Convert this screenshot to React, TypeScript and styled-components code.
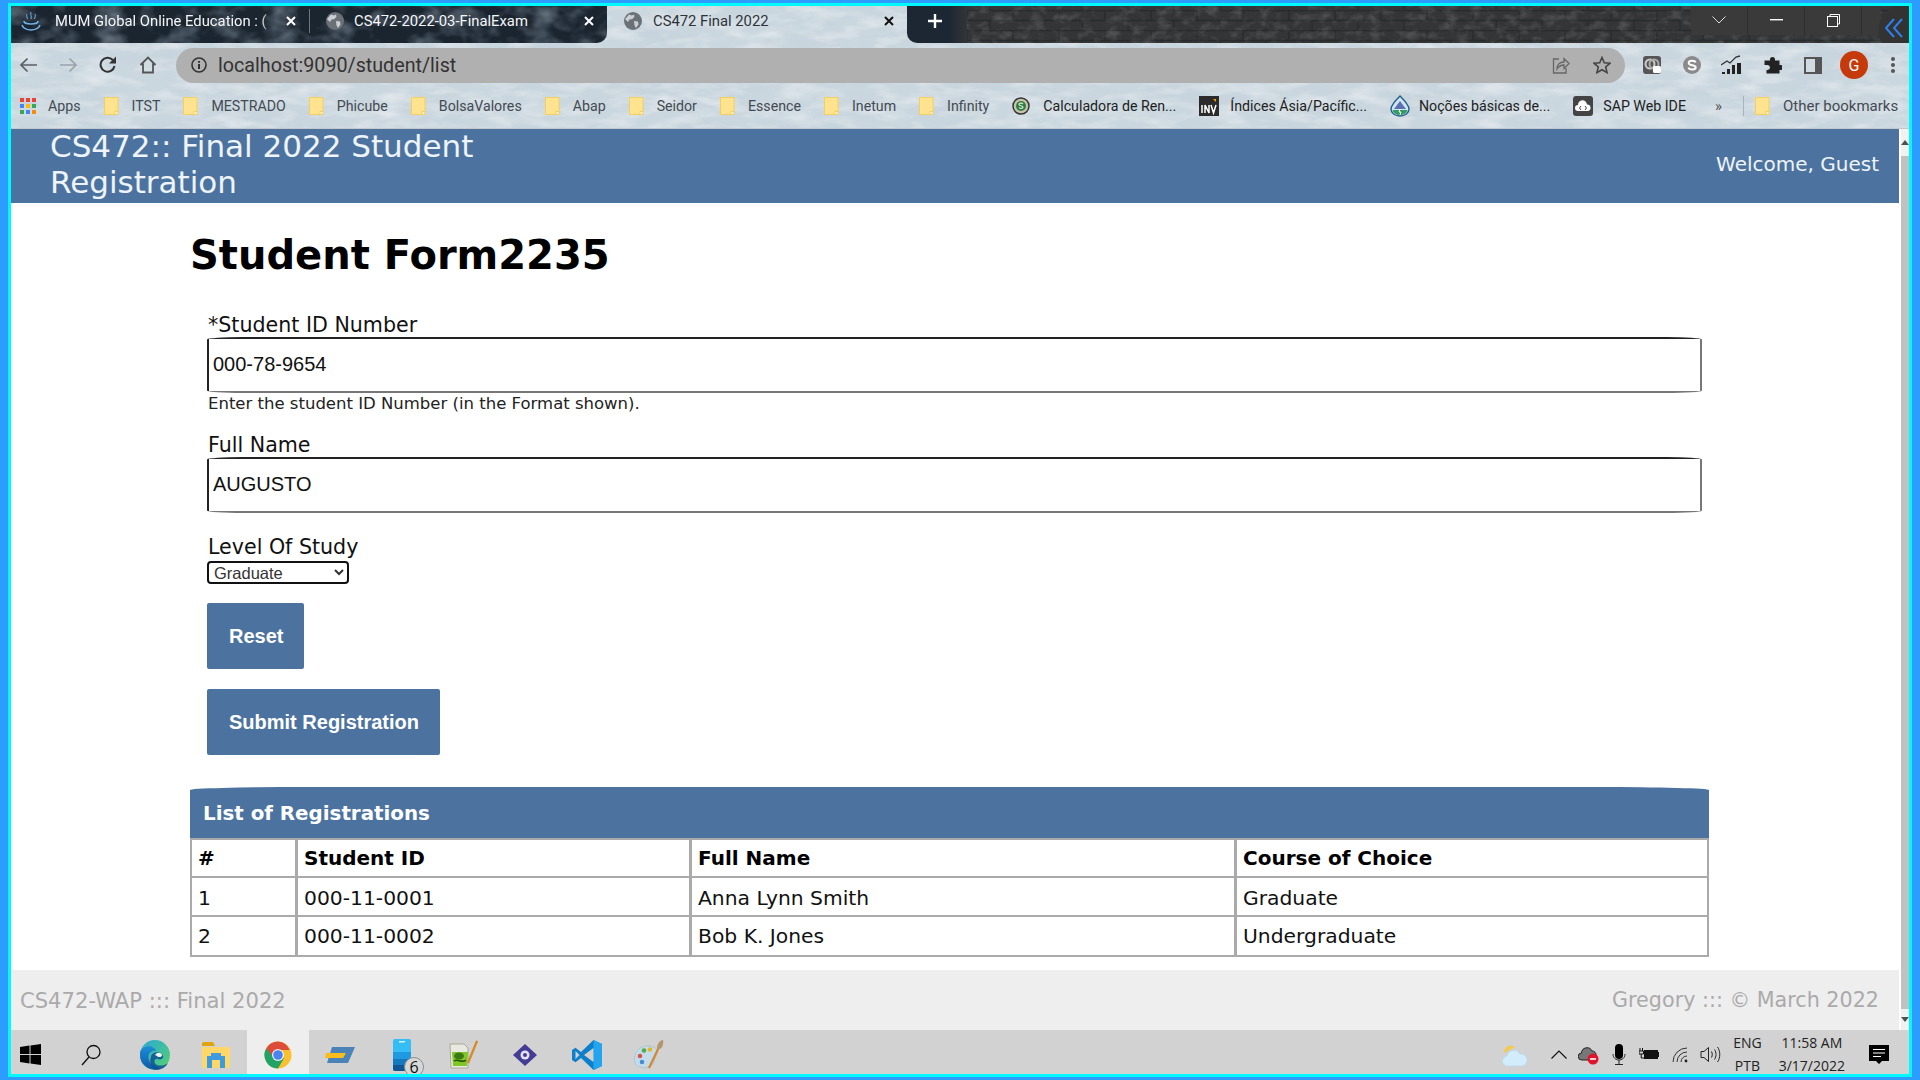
import React from "react";
import styled, { createGlobalStyle } from "styled-components";

const Global = createGlobalStyle`
  html, body { margin: 0; padding: 0; background: #2f9bff; overflow: hidden; }
  * { box-sizing: border-box; }
`;

const Screen = styled.div`
  width: 1920px; height: 1080px;
  border-style: solid; border-color: #2d9cff;
  border-width: 3px 8px 3px 8px;
`;
const Desktop = styled.div`
  height: 100%;
  border: 3px solid #00f8ff;
  display: flex; flex-direction: column;
  background: #fff; overflow: hidden;
`;
/* ---------- browser chrome ---------- */
const BrowserChrome = styled.header`
  position: relative; height: 123px; flex: none;
  background: #cbd7df;
  border-bottom: 1px solid #c4c8cc;
  display: flex; flex-direction: column;
  overflow: hidden;
`;
const TextureLayer = styled.svg`
  position: absolute; inset: 0; width: 100%; height: 100%;
  pointer-events: none;
`;
const TabStrip = styled.div`
  position: relative; height: 37px; flex: none; display: flex;
`;
const DarkStrip = styled.div<{ $w?: number; $side: "l" | "r" }>`
  position: relative; overflow: hidden;
  ${p => (p.$w ? `width:${p.$w}px;flex:none;` : "flex:1;")}
  background: ${p => (p.$side === "l" ? "#1a2530" : "linear-gradient(90deg,#1c2733 0,#1c2733 42px,#333537 60px)")};
  border-radius: ${p => (p.$side === "l" ? "0 0 10px 0" : "0 0 0 10px")};
  display: flex; align-items: center; padding-bottom: 7px;
`;
const Tab = styled.div<{ $w: number; $active?: boolean; $pad: number }>`
  position: relative; width: ${p => p.$w}px; flex: none; height: 100%;
  display: flex; align-items: center; padding-left: ${p => p.$pad}px;
  color: ${p => (p.$active ? "#2e3338" : "#f4f6f8")};
  ${p => p.$active && "padding-bottom: 7px;"}
`;
const TabTitle = styled.span<{ $w: number; $fade?: boolean }>`
  width: ${p => p.$w}px; flex: none; white-space: nowrap;
  font: 14.8px Roboto, sans-serif;
  ${p => p.$fade && "mask-image: linear-gradient(90deg,#000 92%,transparent 100%);"}
`;
const TabClose = styled.span<{ $dark?: boolean }>`
  display: flex; margin-left: auto; margin-right: 11px;
  color: ${p => (p.$dark ? "#111" : "#fff")};
`;
const TabDivider = styled.span`
  width: 1px; height: 24px; background: #6e757c; flex: none;
`;
const TabIcon = styled.span<{ $gap: number }>`
  display: flex; flex: none; margin-right: ${p => p.$gap}px;
`;
const PlusButton = styled.span`
  position: relative; display: flex; margin-left: 20px; color: #fff;
`;
const WindowControls = styled.div`
  position: relative; margin-left: auto; margin-right: 29px; margin-top: -1px;
  width: 189px; height: 30px; align-self: flex-start; background: #3a3a3a;
  display: grid; grid-template-columns: 57px 57px 57px 18px;
  color: #eee;
`;
const ControlCell = styled.span`
  display: flex; align-items: center; justify-content: center;
  border-right: 1px solid #2d2d2d;
`;
const CollapseTab = styled.div`
  position: absolute; right: 0; top: 0; width: 30px; height: 43px;
  background: #333; border-radius: 22px 0 0 16px;
  display: flex; align-items: center; justify-content: center;
  color: #2f7fe8;
`;
const Toolbar = styled.div`
  position: relative; height: 41px; flex: none; display: flex; align-items: center;
  padding: 3px 0 0 8px;
`;
const NavSlot = styled.span<{ $w: number }>`
  width: ${p => p.$w}px; flex: none; display: flex; color: #3f4448;
`;
const UrlBar = styled.div`
  height: 35px; width: 1449px; flex: none; border-radius: 18px; background: #b0b0b0;
  display: flex; align-items: center; padding: 0 14px 0 15px;
  color: #333;
  margin-left: 9px;
  font: 19.7px Roboto, sans-serif;
`;
const UrlText = styled.span`
  margin-left: 11px; flex: 1;
`;
const UrlAction = styled.span<{ $ml?: number }>`
  display: flex; margin-left: ${p => p.$ml ?? 0}px; color: #555;
`;
const ExtSlot = styled.span<{ $ml: number }>`
  display: flex; margin-left: ${p => p.$ml}px; align-items: center;
`;
const Avatar = styled.span`
  width: 28px; height: 28px; border-radius: 50%; background: #c6390b; color: #fff;
  display: flex; align-items: center; justify-content: center;
  font: 16px Roboto, sans-serif;
  margin-left: 18px;
`;
const BookmarkBar = styled.nav`
  position: relative; flex: 1; display: flex; align-items: center;
  padding: 0 0 0 9px; gap: 23px;
  font: 14.2px Roboto, sans-serif; color: #444a52;
`;
const Bookmark = styled.span<{ $g?: number; $dark?: boolean }>`
  display: flex; align-items: center; gap: ${p => p.$g ?? 13}px; white-space: nowrap;
  color: ${p => (p.$dark ? "#222" : "#444a52")};
`;
const BarDivider = styled.span`
  width: 1px; height: 20px; background: #aab3ba; margin-left: -2px;
`;
const More = styled.span`
  font-size: 15px; color: #555; margin-left: 6px;
`;
const BookmarkEnd = styled.span`
  margin-left: -12px; display: flex; font-size: 15px;
`;

/* ---------- page ---------- */
const Viewport = styled.div`
  flex: 1; display: flex; min-height: 0;
`;
const Page = styled.div`
  flex: 1; display: flex; flex-direction: column; min-width: 0;
  font-family: "DejaVu Sans", Verdana, sans-serif; color: #111;
`;
const PageHeader = styled.div`
  height: 74px; flex: none; background: #4c739f; color: #eef4fa;
  display: flex; align-items: center; justify-content: space-between;
  padding: 0 20px 0 39px;
`;
const SiteTitle = styled.div`
  width: 480px; font-size: 31px; line-height: 36.5px;
  margin-top: -4px;
`;
const Welcome = styled.div`
  font-size: 20px; margin-top: -5px;
`;
const Main = styled.main`
  flex: 1; padding: 0 0 0 179px; min-height: 0; background: #fff;
`;
const Heading = styled.h1`
  margin: 28px 0 0; font-size: 40px; line-height: 48px; font-weight: 700; color: #000;
`;
const Form = styled.form`
  padding: 36px 0 0 17px; width: 1512px;
`;
const Field = styled.div<{ $mb: number }>`
  margin-bottom: ${p => p.$mb}px;
`;
const Label = styled.label`
  display: block; height: 22px; font-size: 20.6px; line-height: 20px; color: #111; padding-left: 1px;
`;
const TextInput = styled.input`
  display: block; width: 1495px; height: 56px; padding: 0 4px 2px;
  font: 20px "Liberation Sans", Arial, sans-serif; color: #111; background: #fff;
  border: 2px solid; border-color: #222 #777 #777 #222;
  border-radius: 36px / 2.5px; outline: none;
`;
const Hint = styled.div`
  font-size: 16.5px; line-height: 20px; color: #222; padding: 1px 0 0 1px;
`;
const LevelSelect = styled.select`
  display: block; width: 142px; height: 23px; margin-top: 2px; padding: 0 0 2px 1px;
  font: 16.5px "Liberation Sans", Arial, sans-serif; color: #333; background: #fff;
  border: 2px solid #111; border-radius: 4px; outline: none;
`;
const Button = styled.button`
  display: block; height: 66px; padding: 0 21px 0 22px; border: 0; border-radius: 2px;
  background: #4c739f; color: #fff;
  font: 700 20px "Liberation Sans", Arial, sans-serif;
  margin-bottom: 20px;
`;
const RegTable = styled.table`
  width: 1519px; margin-top: 32px; border-collapse: separate; border-spacing: 0;
  table-layout: fixed; font-size: 20.3px; color: #111;
  border-left: 2px solid #aaa; border-bottom: 2px solid #aaa;
  border-right: 2px solid #aaa;
`;
const Caption = styled.caption`
  height: 51px; background: #4c739f; color: #fff; text-align: left;
  font-weight: 700; font-size: 19.85px; line-height: 53px; padding-left: 13px;
  border-radius: 110px 110px 0 0 / 3px 3px 0 0;
`;
const Th = styled.th`
  height: 40px; text-align: left; padding: 0 0 0 6px; font-weight: 700; color: #000; font-size: 20px;
  border-top: 2px solid #aaa; border-bottom: 2px solid #aaa; border-right: 3px solid #aaa;
  &:last-child { border-right: 0; }
`;
const Td = styled.td`
  height: 38.5px; padding: 0 0 0 6px;
  border-bottom: 2px solid #aaa; border-right: 3px solid #aaa;
  tr:first-child > & { padding-top: 3px; }
  tr:last-child > & { border-bottom: 0; }
  &:last-child { border-right: 0; }
`;
const PageFooter = styled.footer`
  height: 60px; flex: none; background: #eee; color: #aaa;
  display: flex; align-items: center; justify-content: space-between;
  padding: 0 20px 0 9px; font-size: 21.1px;
`;
const FooterCredit = styled.span`
  font-size: 20.7px;
`;
const ScrollTrack = styled.div`
  width: 10px; flex: none; background: #f1f1f1; border-left: 2px solid #fff;
  display: flex; flex-direction: column; align-items: center;
`;
const ScrollArrow = styled.span<{ $down?: boolean }>`
  height: 27px; flex: none; display: flex; align-items: center; color: #505050;
  ${p => p.$down && "height:21px;"}
`;
const ScrollThumb = styled.div`
  width: 100%; flex: 1; background: #c1c1c1;
`;

/* ---------- taskbar ---------- */
const Taskbar = styled.div`
  height: 44px; flex: none; background: #d2d2d2;
  display: flex; align-items: stretch;
`;
const StartSlot = styled.span`
  width: 51px; flex: none; display: flex; align-items: center; padding: 5px 0 0 9px;
`;
const TaskSlot = styled.span<{ $active?: boolean }>`
  position: relative; width: 61.8px; flex: none; display: flex; align-items: center; justify-content: center;
  padding-top: 5px;
  ${p => p.$active && "background:#eeeeee;"}
`;
const Badge = styled.span`
  position: absolute; left: 33px; top: 27px; width: 20px; height: 20px; border-radius: 50%;
  border: 1px solid #8d8d8d; background: #d8d8d8; color: #111;
  font: 16px/18px "Open Sans", sans-serif; text-align: center;
`;
const Tray = styled.div`
  margin-left: auto; display: flex; align-items: center; padding: 5px 20px 0 0;
  color: #222;
`;
const TrayIcon = styled.span<{ $ml: number }>`
  display: flex; margin-left: ${p => p.$ml}px;
`;
const TrayText = styled.div<{ $ml: number }>`
  margin-left: ${p => p.$ml}px; margin-top: -2px;
  display: flex; flex-direction: column; align-items: center;
  font: 14px/23px "Open Sans", sans-serif; white-space: nowrap; color: #222;
`;

/* ---------- drawings ---------- */
const Ice = () => (
  <TextureLayer aria-hidden="true">
    <filter id="iceA" x="0" y="0" width="100%" height="100%">
      <feTurbulence type="fractalNoise" baseFrequency="0.012 0.05" numOctaves={4} seed={8} />
      <feColorMatrix values="0 0 0 0 .55  0 0 0 0 .63  0 0 0 0 .70  1.2 0 0 0 -.5" />
    </filter>
    <filter id="iceB" x="0" y="0" width="100%" height="100%">
      <feTurbulence type="fractalNoise" baseFrequency="0.03 0.09" numOctaves={3} seed={21} />
      <feColorMatrix values="0 0 0 0 1  0 0 0 0 1  0 0 0 0 1  1.3 0 0 0 -.55" />
    </filter>
    <rect width="100%" height="100%" filter="url(#iceA)" />
    <rect width="100%" height="100%" filter="url(#iceB)" opacity=".7" />
  </TextureLayer>
);
const DarkGrain = () => (
  <TextureLayer aria-hidden="true">
    <filter id="navy" x="0" y="0" width="100%" height="100%">
      <feTurbulence type="fractalNoise" baseFrequency="0.035 0.05" numOctaves={3} seed={4} />
      <feColorMatrix values="0 0 0 0 .28  0 0 0 0 .34  0 0 0 0 .40  1.4 0 0 0 -.6" />
    </filter>
    <rect width="100%" height="100%" filter="url(#navy)" />
  </TextureLayer>
);
const Bricks = () => (
  <TextureLayer aria-hidden="true">
    <pattern id="brick" width="46" height="20" patternUnits="userSpaceOnUse" patternTransform="translate(2 4)">
      <path d="M0 .5H46M0 10.5H46M12 0V10M35 10V20" stroke="#242526" strokeWidth="1.4" fill="none" />
    </pattern>
    <filter id="stone" x="0" y="0" width="100%" height="100%">
      <feTurbulence type="fractalNoise" baseFrequency="0.08 0.12" numOctaves={3} seed={2} />
      <feColorMatrix values="0 0 0 0 .38  0 0 0 0 .39  0 0 0 0 .39  1 0 0 0 -.45" />
    </filter>
    <rect x="60" width="100%" height="100%" fill="url(#brick)" opacity=".7" />
    <rect x="60" width="100%" height="100%" filter="url(#stone)" opacity=".6" />
  </TextureLayer>
);

const Globe = () => (
  <svg width="20" height="20" viewBox="0 0 20 20">
    <circle cx="10" cy="10" r="9" fill="#6b7176" />
    <path d="M6 3.500l3 1 2-1 .5 2-2 2.500-3 .5-1.500 2.500-3-3zM11 10l4 .5.5 3-2.500 3.500-1.500-2.500z" fill="#c9cfd4" />
  </svg>
);
const Close = () => (
  <svg width="14" height="14" viewBox="0 0 14 14">
    <path d="M3 3l8 8M11 3l-8 8" stroke="currentColor" strokeWidth="2" fill="none" />
  </svg>
);
const MumIcon = () => (
  <svg width="22" height="22" viewBox="0 0 22 22" fill="none" stroke="#6fb2e8" strokeWidth="1.700">
    <path d="M11 2c-1 3 1 4 0 7M7 4c-1 2 .5 4 .5 5M15 4c1 2-.5 4-.5 5" strokeWidth="1" />
    <path d="M4 11c0 2 3 3 7 3s7-1 7-3" />
    <path d="M2 15c1 3 5 5 9 5s8-2 9-5" />
  </svg>
);
const AppsGrid = () => (
  <svg width="16" height="16" viewBox="0 0 16 16">
    {["#ea4335", "#ea4335", "#ea4335", "#4285f4", "#fbbc05", "#34a853", "#34a853", "#4285f4", "#fb8c00"].map((c, i) => (
      <rect key={i} x={(i % 3) * 6} y={Math.floor(i / 3) * 6} width="4" height="4" fill={c} />
    ))}
  </svg>
);
const Folder = () => (
  <svg width="15" height="18" viewBox="0 0 15 18">
    <path d="M.5.500h13.500v14l-3 3H.5z" fill="#ffe38f" stroke="#f3cf5f" />
    <path d="M11 14.500h3v3h-3z" fill="#fff3c4" stroke="#f3cf5f" />
  </svg>
);
const CalcIcon = () => (
  <svg width="18" height="18" viewBox="0 0 18 18">
    <circle cx="9" cy="9" r="8" fill="#c9c3a8" stroke="#333" strokeWidth="1.500" />
    <circle cx="9" cy="9" r="5" fill="#2d7d46" />
    <path d="M11 7c-1-1.300-4-1-4 .5s4 1 4 2.700c0 1.500-3 1.700-4 .3" stroke="#d8e8c8" strokeWidth="1.200" fill="none" />
  </svg>
);
const InvIcon = () => (
  <svg width="20" height="20" viewBox="0 0 20 20">
    <rect width="20" height="20" fill="#2b2b2b" />
    <path d="M3 9v8M6 17v-8l4 8v-8M12 9l2.500 8 2.500-8" stroke="#fff" strokeWidth="1.500" fill="none" />
    <path d="M14 3l3 0 0 3z" fill="#f90" />
  </svg>
);
const TrailIcon = () => (
  <svg width="20" height="22" viewBox="0 0 20 22">
    <path d="M10 1C5 6 1 10 1 14c0 4 4 7 9 7s9-3 9-7c0-4-4-8-9-13z" fill="#cfe6ee" stroke="#235d8a" strokeWidth="1.400" />
    <path d="M4 14l6-8 6 8z" fill="#5b6fb2" />
    <path d="M2.500 15h15c-1 3-4 5-7.500 5s-6.500-2-7.500-5z" fill="#2f9a62" />
    <path d="M10 14l-1 3 2 0-1 3" stroke="#fff" fill="none" />
  </svg>
);
const SapIcon = () => (
  <svg width="20" height="20" viewBox="0 0 20 20">
    <rect width="20" height="20" rx="3" fill="#444" />
    <path d="M5 15a3 3 0 0 1 0-6 4.500 4.500 0 0 1 9-.5 3.300 3.300 0 0 1 1 6.500z" fill="#fff" />
    <path d="M8 10l-1.500 2L8 14M12 10l1.500 2-1.500 2" stroke="#444" fill="none" />
  </svg>
);
const ArrowL = ({ c }: { c: string }) => (
  <svg width="18" height="16" viewBox="0 0 18 16" fill="none" stroke={c} strokeWidth="1.700">
    <path d="M18 8H2M8.500 1.500L2 8l6.500 6.500" />
  </svg>
);
const ArrowR = ({ c }: { c: string }) => (
  <svg width="18" height="16" viewBox="0 0 18 16" fill="none" stroke={c} strokeWidth="1.700">
    <path d="M0 8h16M9.500 1.500L16 8l-6.500 6.500" />
  </svg>
);
const Reload = () => (
  <svg width="18" height="18" viewBox="0 0 18 18" fill="none">
    <path d="M15.500 10a7 7 0 1 1-1.700-6" stroke="#333" strokeWidth="2" />
    <path d="M17 .5v7h-7z" fill="#333" />
  </svg>
);
const HomeI = () => (
  <svg width="18" height="18" viewBox="0 0 18 18" fill="none" stroke="#555" strokeWidth="1.800">
    <path d="M1.500 9L9 1.500 16.500 9M4 7.500V16.500h10V7.500" />
  </svg>
);
const InfoI = () => (
  <svg width="16" height="16" viewBox="0 0 16 16" fill="none" stroke="#333" strokeWidth="1.600">
    <circle cx="8" cy="8" r="7" />
    <path d="M8 7v5M8 4v1.700" strokeWidth="2" />
  </svg>
);
const ShareI = () => (
  <svg width="18" height="18" viewBox="0 0 18 18" fill="none" stroke="#666" strokeWidth="1.300">
    <path d="M7 3H1.500v14H14v-5" />
    <path d="M5 13c0-5 3-7 7-7V2.500L17 7.500l-5 5V9c-3 0-5 1-7 4z" />
  </svg>
);
const StarI = () => (
  <svg width="18" height="18" viewBox="0 0 18 18" fill="none" stroke="#444" strokeWidth="1.600">
    <path d="M9 1.500l2.300 5.200 5.700.5-4.300 3.800 1.300 5.600L9 13.700l-5 2.900 1.300-5.600L1 7.200l5.700-.5z" />
  </svg>
);
const Ext1 = () => (
  <svg width="18" height="18" viewBox="0 0 18 18">
    <rect width="18" height="18" rx="3" fill="#555" />
    <circle cx="7" cy="8" r="4.500" fill="none" stroke="#ccc" strokeWidth="2" />
    <circle cx="11" cy="8" r="4.500" fill="none" stroke="#aaa" strokeWidth="2" />
    <rect x="10" y="10" width="8" height="7" rx="1.500" fill="#fff" />
  </svg>
);
const Skype = () => (
  <svg width="18" height="18" viewBox="0 0 18 18">
    <circle cx="9" cy="9" r="9" fill="#8a8a8a" />
    <path d="M12.500 6.500C12 5 10.500 4.800 9 4.800 7 4.800 5.700 5.700 5.700 7c0 3 7 1.700 7 4.500 0 1.200-1.500 2-3.500 2-1.800 0-3.300-.6-3.700-2" stroke="#fff" strokeWidth="2" fill="none" />
  </svg>
);
const ChartI = () => (
  <svg width="22" height="20" viewBox="0 0 22 20">
    <path d="M0 10l6-4 3 2 6-6 4-1" stroke="#333" strokeWidth="1.300" fill="none" />
    <path d="M1 17h3v2H1zM6 14h3v5H6zM11 10h3v9h-3zM16 8h4v11h-4z" fill="#222" />
  </svg>
);
const PuzzleI = () => (
  <svg width="18" height="18" viewBox="0 0 18 18">
    <path d="M6 3.500a2.500 2.500 0 0 1 5 0V4.500h4.500V9h1a2.500 2.500 0 0 1 0 5h-1v3.500H2.500V14H3.500a2.500 2.500 0 0 0 0-5H.5V4.500H6z" fill="#222" />
  </svg>
);
const SidePanel = () => (
  <svg width="18" height="17" viewBox="0 0 18 17">
    <rect width="18" height="17" fill="#555" />
    <rect x="2" y="2" width="9" height="13" fill="#cfdae1" />
  </svg>
);
const Dots = () => (
  <svg width="4" height="16" viewBox="0 0 4 16">
    <circle cx="2" cy="2" r="2" fill="#555" /><circle cx="2" cy="8" r="2" fill="#555" /><circle cx="2" cy="14" r="2" fill="#555" />
  </svg>
);
const WinLogo = () => (
  <svg width="21" height="21" viewBox="0 0 21 21">
    <path d="M0 3l9.500-1.400V10H0zM10.500 1.500L21 0v10H10.500zM0 11h9.500v8.400L0 18zM10.500 11H21v10l-10.500-1.500z" fill="#000" />
  </svg>
);
const SearchI = () => (
  <svg width="30" height="22" viewBox="0 0 30 22" fill="none" stroke="#111" strokeWidth="1.300">
    <circle cx="15.500" cy="8" r="6.500" />
    <path d="M11 13l-7 8" />
  </svg>
);
const Edge = () => (
  <svg width="30" height="30" viewBox="0 0 30 30">
    <defs>
      <linearGradient id="edgeA" x1="0" y1="0" x2="1" y2="1"><stop offset="0" stopColor="#2aa8d8" /><stop offset="1" stopColor="#56d36c" /></linearGradient>
      <linearGradient id="edgeB" x1="0" y1="0" x2="0" y2="1"><stop offset="0" stopColor="#1d8cd6" /><stop offset="1" stopColor="#0e5aa7" /></linearGradient>
    </defs>
    <circle cx="15" cy="15" r="15" fill="url(#edgeA)" />
    <path d="M1 10c4-5 13-5 15 1-5-1-9 3-7 9 1 4 6 8 12 8-9 5-21-2-21-13 0-2 0-3 1-5z" fill="url(#edgeB)" />
    <path d="M11 17c0-5 10-7 12-1 1 3-3 4-5 3-4-1-5 4-1 6 3 1 7 1 11-2-3 6-10 8-14 6-3-2-5-7-3-12z" fill="#0f4f96" opacity=".85" />
    <path d="M15 15c2-3 6-3 7 0 .5 2-4 3-5 1z" fill="#eaf7f0" />
  </svg>
);
const Files = () => (
  <svg width="28" height="26" viewBox="0 0 28 26">
    <path d="M0 2a2 2 0 0 1 2-2h9l2 4H0z" fill="#dfa40e" />
    <path d="M0 5h28v19a2 2 0 0 1-2 2H2a2 2 0 0 1-2-2z" fill="#ffd768" />
    <path d="M5 26V14h4v-3h10v3h4v12h-5v-8h-8v8z" fill="#3f9be0" />
  </svg>
);
const ChromeLogo = () => (
  <svg width="28" height="28" viewBox="0 0 28 28">
    <circle cx="14" cy="14" r="13.500" fill="#fbc02d" />
    <path d="M14 .5A13.500 13.500 0 0 0 2.300 7.200L8.600 18 14 9h11.700A13.500 13.500 0 0 0 14 .5z" fill="#dd4b39" />
    <path d="M2.300 7.200A13.500 13.500 0 0 0 14 27.500l6.200-10.700-3 1.500H11z" fill="#21a366" />
    <circle cx="14" cy="14" r="6" fill="#f2f2f2" />
    <circle cx="14" cy="14" r="4.800" fill="#4b83f0" />
  </svg>
);
const NoteApp = () => (
  <svg width="30" height="16" viewBox="0 0 30 16">
    <path d="M7 0h23l-7 16H2z" fill="#4a83b8" />
    <path d="M1 6h20l-3 5H0z" fill="#f8bd1c" />
  </svg>
);
const Phone = () => (
  <svg width="18" height="32" viewBox="0 0 18 32">
    <rect width="18" height="32" rx="2" fill="#35bdf5" />
    <rect y="13" width="18" height="7" fill="#1f9ae0" />
    <rect y="20" width="18" height="6" fill="#1579bf" />
    <path d="M0 26h18v4a2 2 0 0 1-2 2H2a2 2 0 0 1-2-2z" fill="#0f5696" />
    <rect x="6" y="2" width="6" height="1.500" fill="#d4f1ff" />
  </svg>
);
const Npp = () => (
  <svg width="30" height="30" viewBox="0 0 30 30">
    <path d="M1 4h14l4 4v20H2z" fill="#e9eadf" stroke="#a9a99a" />
    <path d="M3 12h16l-1 14H4z" fill="#7ec726" />
    <ellipse cx="10" cy="16" rx="5" ry="3.500" fill="#3c7a14" />
    <path d="M5 21c4-3 8 3 12-1" stroke="#25500b" strokeWidth="1.500" fill="none" />
    <path d="M28 1l-9 22" stroke="#d68a1f" strokeWidth="2.200" />
    <path d="M28 1l-1-.5 2 1.500z" fill="#222" />
  </svg>
);
const Diamond = () => (
  <svg width="24" height="22" viewBox="0 0 24 22">
    <path d="M12 0l12 11-12 11L0 11z" fill="#433c97" />
    <circle cx="12" cy="11" r="4.500" fill="#e4e4ee" />
    <circle cx="12" cy="11" r="2" fill="#433c97" />
  </svg>
);
const VSCode = () => (
  <svg width="30" height="30" viewBox="0 0 30 30">
    <path d="M21.500 0L30 4v22l-8.500 4L9 18l-5.500 4.300L0 20V10l3.500-2.300L9 12z" fill="#0e7fca" />
    <path d="M21.500 0L30 4v22l-8.500 4z" fill="#22a5ee" />
    <path d="M21.500 8L12 15l9.500 7z" fill="#d2d2d2" />
    <path d="M3.500 11L7.500 15l-4 4z" fill="#d2d2d2" />
  </svg>
);
const PaintApp = () => (
  <svg width="30" height="30" viewBox="0 0 30 30">
    <path d="M.5 18C1 9 9 5 16 6c7 1 9 6 6 10-2 3-1 5-3 8-3 4-9 4-13 3C2 26 0 22 .5 18z" fill="#c3dcea" stroke="#9db7c6" strokeWidth=".6" />
    <circle cx="6" cy="16" r="2.300" fill="#d9534a" /><circle cx="10" cy="10.500" r="2.300" fill="#5aa846" />
    <circle cx="16" cy="9.500" r="2.300" fill="#e9b32c" /><circle cx="8" cy="22" r="2.300" fill="#4c8bd1" />
    <path d="M26 5L15 28" stroke="#d8872c" strokeWidth="2.200" />
    <path d="M23 8c0-4 3-8 6-8 1 4-1 9-4 9z" fill="#b59470" />
  </svg>
);
const CloudSun = () => (
  <svg width="26" height="24" viewBox="0 0 26 24">
    <path d="M2 10a7 7 0 0 1 11-6z" fill="#f7c948" />
    <path d="M6 23a5 5 0 0 1-1-10 7 7 0 0 1 13-2 6 6 0 0 1 2 12z" fill="#d3ecfb" stroke="#b4d8ef" strokeWidth=".6" />
  </svg>
);
const Caret = () => (
  <svg width="16" height="9" viewBox="0 0 16 9" fill="none" stroke="#111" strokeWidth="1.200"><path d="M.5 8.500L8 1l7.500 7.500" /></svg>
);
const OneDriveOff = () => (
  <svg width="21" height="20" viewBox="0 0 21 20">
    <path d="M4 15a3.500 3.500 0 0 1-.5-7A5.500 5.500 0 0 1 14 6a4 4 0 0 1 4 5v4z" fill="#777" stroke="#222" />
    <circle cx="15" cy="14" r="5.500" fill="#e0142a" />
    <rect x="12" y="13.200" width="6" height="1.600" fill="#fff" />
  </svg>
);
const Mic = () => (
  <svg width="14" height="21" viewBox="0 0 14 21">
    <rect x="3" y="0" width="8" height="15" rx="4" fill="#000" />
    <path d="M1 10c0 8 12 8 12 0M7 16v4M3 20.500h8" stroke="#222" strokeWidth="1" fill="none" />
  </svg>
);
const Battery = () => (
  <svg width="20" height="13" viewBox="0 0 20 13">
    <path d="M1 0v3M3.500 0v3M0 3h4.500v3H0zM2.200 6v4h3" stroke="#111" fill="none" />
    <rect x="5" y="2" width="14" height="9" fill="#111" />
    <rect x="18.500" y="4" width="1.500" height="5" fill="#111" />
  </svg>
);
const Wifi = () => (
  <svg width="18" height="16" viewBox="0 0 18 16" fill="none" stroke="#333">
    <path d="M1 15A14 14 0 0 1 15 1M5 15A10 10 0 0 1 15 5M9 15A6 6 0 0 1 15 9" />
    <circle cx="14" cy="14" r="1.400" fill="#222" stroke="none" />
  </svg>
);
const Speaker = () => (
  <svg width="21" height="17" viewBox="0 0 21 17" fill="none" stroke="#222">
    <path d="M1 5.500h3L8.500 1.500v14L4 11.500H1z" />
    <path d="M11.500 5.500c1 2 1 4 0 6M14.500 3.500c2 3 2 7 0 10M17.500 1c3 4 3 11 0 15" />
  </svg>
);
const Notify = () => (
  <svg width="20" height="20" viewBox="0 0 20 20">
    <path d="M0 0h20v16h-7l-3 3-3-3H0z" fill="#000" />
    <path d="M4 4.500h12M4 8h12M4 11.500h8" stroke="#fff" />
  </svg>
);

const bookmarks = ["ITST", "MESTRADO", "Phicube", "BolsaValores", "Abap", "Seidor", "Essence", "Inetum", "Infinity"];
const rows = [
  ["1", "000-11-0001", "Anna Lynn Smith", "Graduate"],
  ["2", "000-11-0002", "Bob K. Jones", "Undergraduate"],
];

export default function App() {
  return (
    <>
      <Global />
      <Screen>
        <Desktop>
          <BrowserChrome>
            <Ice />
            <TabStrip>
              <DarkStrip $w={596} $side="l">
                <DarkGrain />
                <Tab $w={298} $pad={9}>
                  <TabIcon $gap={13}><MumIcon /></TabIcon>
                  <TabTitle $w={222} $fade>MUM Global Online Education : (</TabTitle>
                  <TabClose><Close /></TabClose>
                </Tab>
                <TabDivider />
                <Tab $w={297} $pad={15}>
                  <TabIcon $gap={9}><Globe /></TabIcon>
                  <TabTitle $w={176}>CS472-2022-03-FinalExam</TabTitle>
                  <TabClose><Close /></TabClose>
                </Tab>
              </DarkStrip>
              <Tab $w={300} $pad={16} $active>
                <TabIcon $gap={10}><Globe /></TabIcon>
                <TabTitle $w={170}>CS472 Final 2022</TabTitle>
                <TabClose $dark><Close /></TabClose>
              </Tab>
              <DarkStrip $side="r">
                <Bricks />
                <PlusButton>
                  <svg width="16" height="16" viewBox="0 0 16 16"><path d="M8 1v14M1 8h14" stroke="currentColor" strokeWidth="2.400" /></svg>
                </PlusButton>
                <WindowControls>
                  <ControlCell>
                    <svg width="14" height="8" viewBox="0 0 14 8" fill="none" stroke="#ddd"><path d="M.5.500L7 7 13.500.5" /></svg>
                  </ControlCell>
                  <ControlCell>
                    <svg width="13" height="2" viewBox="0 0 13 2"><rect width="13" height="1.400" fill="#fff" /></svg>
                  </ControlCell>
                  <ControlCell>
                    <svg width="13" height="13" viewBox="0 0 13 13" fill="none" stroke="#fff"><path d="M3 2.500V.5h9.500V10h-2" /><rect x=".5" y="2.500" width="10" height="10" /></svg>
                  </ControlCell>
                </WindowControls>
                <CollapseTab>
                  <svg width="18" height="20" viewBox="0 0 18 20" fill="none" stroke="currentColor" strokeWidth="2"><path d="M9 1L1 10l8 9M17 1L9 10l8 9" /></svg>
                </CollapseTab>
              </DarkStrip>
            </TabStrip>
            <Toolbar>
              <NavSlot $w={41}><ArrowL c="#5b6066" /></NavSlot>
              <NavSlot $w={39}><ArrowR c="#9aa3aa" /></NavSlot>
              <NavSlot $w={40}><Reload /></NavSlot>
              <NavSlot $w={28}><HomeI /></NavSlot>
              <UrlBar>
                <InfoI />
                <UrlText>localhost:9090/student/list</UrlText>
                <UrlAction><ShareI /></UrlAction>
                <UrlAction $ml={23}><StarI /></UrlAction>
              </UrlBar>
              <ExtSlot $ml={18}><Ext1 /></ExtSlot>
              <ExtSlot $ml={22}><Skype /></ExtSlot>
              <ExtSlot $ml={20}><ChartI /></ExtSlot>
              <ExtSlot $ml={21}><PuzzleI /></ExtSlot>
              <ExtSlot $ml={22}><SidePanel /></ExtSlot>
              <Avatar>G</Avatar>
              <ExtSlot $ml={23}><Dots /></ExtSlot>
            </Toolbar>
            <BookmarkBar>
              <Bookmark $g={12}><AppsGrid />Apps</Bookmark>
              {bookmarks.map(b => (
                <Bookmark key={b}><Folder />{b}</Bookmark>
              ))}
              <Bookmark $g={13} $dark><CalcIcon />Calculadora de Ren...</Bookmark>
              <Bookmark $g={11} $dark><InvIcon />Índices Ásia/Pacífic...</Bookmark>
              <Bookmark $g={9} $dark><TrailIcon />Noções básicas de...</Bookmark>
              <Bookmark $g={10} $dark><SapIcon />SAP Web IDE</Bookmark>
              <More>»</More>
              <BarDivider />
              <BookmarkEnd><Bookmark><Folder />Other bookmarks</Bookmark></BookmarkEnd>
            </BookmarkBar>
          </BrowserChrome>
          <Viewport>
            <Page>
              <PageHeader>
                <SiteTitle>CS472:: Final 2022 Student Registration</SiteTitle>
                <Welcome>Welcome, Guest</Welcome>
              </PageHeader>
              <Main>
                <Heading>Student Form2235</Heading>
                <Form onSubmit={e => e.preventDefault()}>
                  <Field $mb={21}>
                    <Label htmlFor="sid">*Student ID Number</Label>
                    <TextInput id="sid" defaultValue="000-78-9654" />
                    <Hint>Enter the student ID Number (in the Format shown).</Hint>
                  </Field>
                  <Field $mb={24}>
                    <Label htmlFor="fname">Full Name</Label>
                    <TextInput id="fname" defaultValue="AUGUSTO" />
                  </Field>
                  <Field $mb={19}>
                    <Label htmlFor="level">Level Of Study</Label>
                    <LevelSelect id="level" defaultValue="Graduate">
                      <option>Graduate</option>
                      <option>Undergraduate</option>
                    </LevelSelect>
                  </Field>
                  <Button type="reset">Reset</Button>
                  <Button type="submit">Submit Registration</Button>
                </Form>
                <RegTable>
                  <Caption>List of Registrations</Caption>
                  <colgroup>
                    <col style={{ width: 106 }} />
                    <col style={{ width: 394 }} />
                    <col style={{ width: 545 }} />
                    <col />
                  </colgroup>
                  <thead>
                    <tr>
                      <Th>#</Th><Th>Student ID</Th><Th>Full Name</Th><Th>Course of Choice</Th>
                    </tr>
                  </thead>
                  <tbody>
                    {rows.map(r => (
                      <tr key={r[0]}>
                        {r.map((c, i) => <Td key={i}>{c}</Td>)}
                      </tr>
                    ))}
                  </tbody>
                </RegTable>
              </Main>
              <PageFooter>
                <span>CS472-WAP ::: Final 2022</span>
                <FooterCredit>Gregory ::: © March 2022</FooterCredit>
              </PageFooter>
            </Page>
            <ScrollTrack>
              <ScrollArrow>
                <svg width="8" height="5" viewBox="0 0 8 5"><path d="M4 0l4 5H0z" fill="currentColor" /></svg>
              </ScrollArrow>
              <ScrollThumb />
              <ScrollArrow $down>
                <svg width="8" height="5" viewBox="0 0 8 5"><path d="M0 0h8L4 5z" fill="currentColor" /></svg>
              </ScrollArrow>
            </ScrollTrack>
          </Viewport>
          <Taskbar>
            <StartSlot><WinLogo /></StartSlot>
            <TaskSlot><SearchI /></TaskSlot>
            <TaskSlot><Edge /></TaskSlot>
            <TaskSlot><Files /></TaskSlot>
            <TaskSlot $active><ChromeLogo /></TaskSlot>
            <TaskSlot><NoteApp /></TaskSlot>
            <TaskSlot><Phone /><Badge>6</Badge></TaskSlot>
            <TaskSlot><Npp /></TaskSlot>
            <TaskSlot><Diamond /></TaskSlot>
            <TaskSlot><VSCode /></TaskSlot>
            <TaskSlot><PaintApp /></TaskSlot>
            <Tray>
              <TrayIcon $ml={0}><CloudSun /></TrayIcon>
              <TrayIcon $ml={23}><Caret /></TrayIcon>
              <TrayIcon $ml={11}><OneDriveOff /></TrayIcon>
              <TrayIcon $ml={13}><Mic /></TrayIcon>
              <TrayIcon $ml={13}><Battery /></TrayIcon>
              <TrayIcon $ml={13}><Wifi /></TrayIcon>
              <TrayIcon $ml={10}><Speaker /></TrayIcon>
              <TrayText $ml={12}><span>ENG</span><span>PTB</span></TrayText>
              <TrayText $ml={17}><span>11:58 AM</span><span>3/17/2022</span></TrayText>
              <TrayIcon $ml={24}><Notify /></TrayIcon>
            </Tray>
          </Taskbar>
        </Desktop>
      </Screen>
    </>
  );
}
